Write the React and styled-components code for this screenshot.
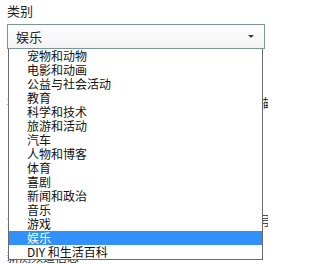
import styled, { createGlobalStyle } from "styled-components";

const GlobalStyle = createGlobalStyle`
  html, body {
    margin: 0;
    padding: 0;
    background: #ffffff;
    overflow: hidden;
  }
  body {
    font-family: "Noto Sans CJK SC", "Liberation Sans", sans-serif;
    color: #1e1e1e;
  }
`;

const items = [
  "宠物和动物",
  "电影和动画",
  "公益与社会活动",
  "教育",
  "科学和技术",
  "旅游和活动",
  "汽车",
  "人物和博客",
  "体育",
  "喜剧",
  "新闻和政治",
  "音乐",
  "游戏",
  "娱乐",
  "DIY 和生活百科",
];

const Page = styled.div`
  width: 268px;
  height: 264px;
  padding: 3px 3px 0 7px;
  box-sizing: border-box;
  overflow: hidden;
`;

const Label = styled.div`
  font-size: 13px;
  line-height: 15px;
  height: 21px;
`;

const SelectWrap = styled.div`
  position: relative;
`;

const SelectBox = styled.div`
  height: 25px;
  box-sizing: border-box;
  border: 1px solid #7895a0;
  background: linear-gradient(#fdfdfd, #f3f3f3);
  display: flex;
  align-items: center;
  justify-content: space-between;
  padding: 0 10px 0 8px;
  font-size: 13px;
`;

const Arrow = styled.span`
  width: 0;
  height: 0;
  border-left: 3px solid transparent;
  border-right: 3px solid transparent;
  border-top: 3px solid #404040;
`;

const List = styled.ul`
  position: absolute;
  top: 25px;
  left: 1px;
  right: 2px;
  margin: 0;
  padding: 0;
  list-style: none;
  background: #ffffff;
  border: 1px solid #6a6a6a;
  border-top: none;
  z-index: 2;
`;

const Item = styled.li`
  height: 14px;
  line-height: 14px;
  font-size: 12px;
  padding-left: 18px;
  white-space: nowrap;
  background: ${(p) => (p.$active ? "#3291f8" : "transparent")};
  color: ${(p) => (p.$active ? "#ffffff" : "#111111")};
`;

const Under = styled.div`
  font-size: 12px;
  line-height: 14px;
  white-space: nowrap;
`;

const UnderRow = styled.div`
  margin-top: ${(p) => p.$gap}px;
  height: 14px;
`;

export default function App() {
  return (
    <Page>
      <GlobalStyle />
      <Label>类别</Label>
      <SelectWrap>
        <SelectBox>
          <span>娱乐</span>
          <Arrow />
        </SelectBox>
        <List>
          {items.map((t) => (
            <Item key={t} $active={t === "娱乐"}>
              {t}
            </Item>
          ))}
        </List>
      </SelectWrap>
      <Under>
        <UnderRow $gap={3}>：频道简介</UnderRow>
        <UnderRow $gap={30}>视频说明文字内容会显示在这里，请填写完整的描述信息</UnderRow>
        <UnderRow $gap={30}>：标签</UnderRow>
        <UnderRow $gap={60}>添加标签以便观众找到你的视频，每个标签用逗号分隔开</UnderRow>
        <UnderRow $gap={22}>新测频道信息</UnderRow>
      </Under>
    </Page>
  );
}
